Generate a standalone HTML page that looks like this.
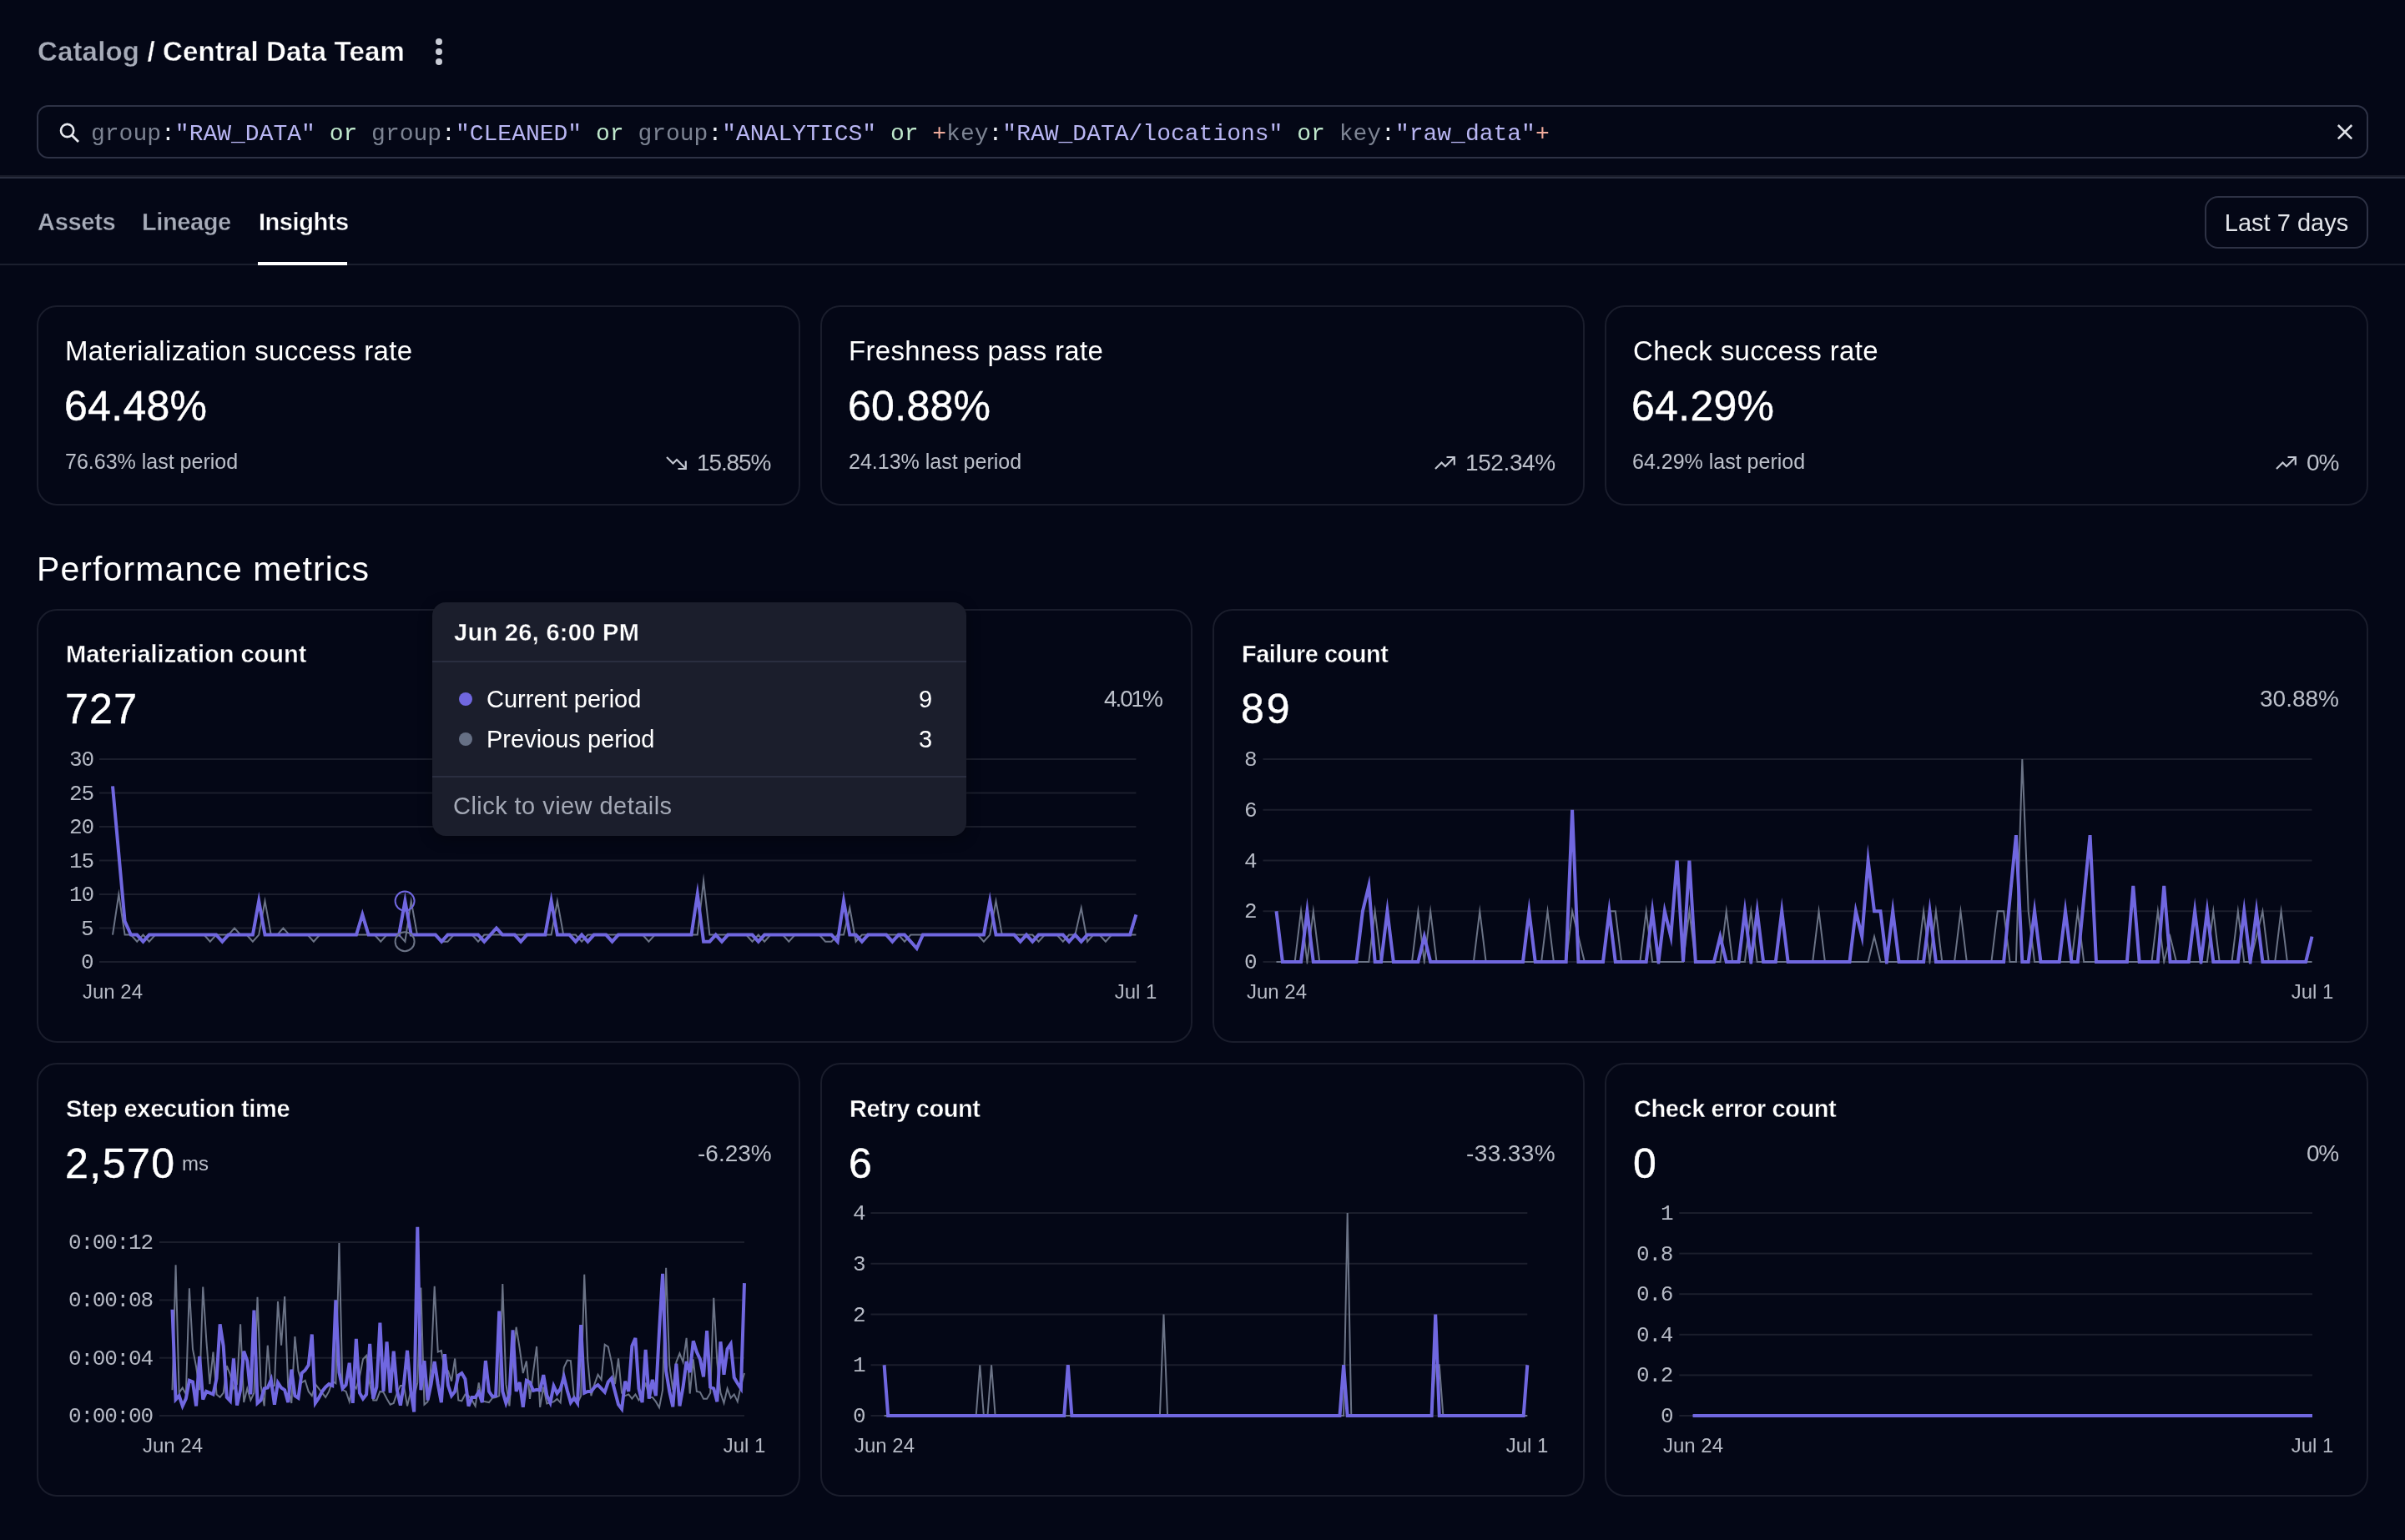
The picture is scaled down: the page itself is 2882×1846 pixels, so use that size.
<!DOCTYPE html>
<html><head><meta charset="utf-8"><title>Insights</title><style>
html,body{margin:0;padding:0;}
body{width:2882px;height:1846px;background:#040716;position:relative;overflow:hidden;font-family:'Liberation Sans', sans-serif;}
.t{position:absolute;white-space:nowrap;will-change:transform;}
.b{position:absolute;}
svg.ov{position:absolute;left:0;top:0;}
</style></head><body>
<div class="t" style="top:45.07px;font-size:33px;line-height:33px;color:#fff;font-weight:700;font-family:'Liberation Sans', sans-serif;letter-spacing:0.15px;left:45px;-webkit-text-stroke:0.4px #040716;"><span style="color:#a7acb9">Catalog</span> / Central Data Team</div>
<div class="b" style="left:522px;top:46px;width:8px;height:8px;border-radius:50%;background:#c9ccd6;"></div>
<div class="b" style="left:522px;top:58px;width:8px;height:8px;border-radius:50%;background:#c9ccd6;"></div>
<div class="b" style="left:522px;top:70px;width:8px;height:8px;border-radius:50%;background:#c9ccd6;"></div>
<div class="b" style="left:44px;top:126px;width:2794px;height:64px;border:2px solid #2e3245;border-radius:14px;box-sizing:border-box;"></div>
<div class="t" style="top:147.05px;font-size:28px;line-height:28px;color:#fff;font-weight:400;font-family:'Liberation Mono', monospace;left:108.6px;white-space:pre;"><span style="color:#7d8493">group</span><span style="color:#e9ebf0">:</span><span style="color:#b9b6f3">"RAW_DATA"</span> <span style="color:#bfe8cc">or</span> <span style="color:#7d8493">group</span><span style="color:#e9ebf0">:</span><span style="color:#b9b6f3">"CLEANED"</span> <span style="color:#bfe8cc">or</span> <span style="color:#7d8493">group</span><span style="color:#e9ebf0">:</span><span style="color:#b9b6f3">"ANALYTICS"</span> <span style="color:#bfe8cc">or</span> <span style="color:#f0ab9c">+</span><span style="color:#7d8493">key</span><span style="color:#e9ebf0">:</span><span style="color:#b9b6f3">"RAW_DATA/locations"</span> <span style="color:#bfe8cc">or</span> <span style="color:#7d8493">key</span><span style="color:#e9ebf0">:</span><span style="color:#b9b6f3">"raw_data"</span><span style="color:#f0ab9c">+</span></div>
<div class="b" style="left:0px;top:210px;width:2882px;height:2px;background:#191c2a;"></div>
<div class="b" style="left:0px;top:212px;width:2882px;height:2px;background:#2a2e3f;"></div>
<div class="t" style="top:252.45px;font-size:29px;line-height:29px;color:#a7acb9;font-weight:700;font-family:'Liberation Sans', sans-serif;letter-spacing:-0.3px;left:45px;-webkit-text-stroke:0.4px #040716;">Assets</div>
<div class="t" style="top:252.45px;font-size:29px;line-height:29px;color:#a7acb9;font-weight:700;font-family:'Liberation Sans', sans-serif;letter-spacing:-0.4px;left:169.5px;-webkit-text-stroke:0.4px #040716;">Lineage</div>
<div class="t" style="top:252.45px;font-size:29px;line-height:29px;color:#ffffff;font-weight:700;font-family:'Liberation Sans', sans-serif;letter-spacing:-0.45px;left:309.5px;-webkit-text-stroke:0.4px #040716;">Insights</div>
<div class="b" style="left:0px;top:316px;width:2882px;height:2px;background:#1b1f2e;"></div>
<div class="b" style="left:309px;top:314px;width:107px;height:4px;background:#ffffff;"></div>
<div class="b" style="left:2642px;top:235px;width:196px;height:63px;border:2px solid #2e3245;border-radius:16px;box-sizing:border-box;"></div>
<div class="t" style="top:252.95px;font-size:29px;line-height:29px;color:#e3e5ea;font-weight:400;font-family:'Liberation Sans', sans-serif;left:2239.5px;width:1000px;text-align:center;">Last 7 days</div>
<div class="b" style="left:44px;top:366px;width:915.33px;height:240px;border:2px solid #1a1d2c;border-radius:24px;box-sizing:border-box;"></div>
<div class="t" style="top:403.57px;font-size:33px;line-height:33px;color:#ffffff;font-weight:400;font-family:'Liberation Sans', sans-serif;letter-spacing:0.33px;left:78px;">Materialization success rate</div>
<div class="t" style="top:462.18px;font-size:50px;line-height:50px;color:#ffffff;font-weight:400;font-family:'Liberation Sans', sans-serif;letter-spacing:0.3px;left:76.5px;-webkit-text-stroke:0.4px #fff;">64.48%</div>
<div class="t" style="top:540.84px;font-size:25px;line-height:25px;color:#bcc0ca;font-weight:400;font-family:'Liberation Sans', sans-serif;left:77.5px;">76.63% last period</div>
<div class="t" style="top:541.30px;font-size:28px;line-height:28px;color:#bcc0ca;font-weight:400;font-family:'Liberation Sans', sans-serif;letter-spacing:-1.1px;right:1958.77px;text-align:right;display:flex;align-items:center;"><svg width="26" height="20" viewBox="0 0 26 20" style="margin-right:11px;flex:none"><g fill="none" stroke="#c3c7d1" stroke-width="2.2"><polyline points="1,3 8.5,10.5 13,6 23.5,16.5"/><polyline points="23.8,7.5 23.8,17 14.5,17"/></g></svg>15.85%</div>
<div class="b" style="left:983.33px;top:366px;width:915.34px;height:240px;border:2px solid #1a1d2c;border-radius:24px;box-sizing:border-box;"></div>
<div class="t" style="top:403.57px;font-size:33px;line-height:33px;color:#ffffff;font-weight:400;font-family:'Liberation Sans', sans-serif;letter-spacing:0.33px;left:1017.33px;">Freshness pass rate</div>
<div class="t" style="top:462.18px;font-size:50px;line-height:50px;color:#ffffff;font-weight:400;font-family:'Liberation Sans', sans-serif;letter-spacing:0.3px;left:1015.83px;-webkit-text-stroke:0.4px #fff;">60.88%</div>
<div class="t" style="top:540.84px;font-size:25px;line-height:25px;color:#bcc0ca;font-weight:400;font-family:'Liberation Sans', sans-serif;left:1016.83px;">24.13% last period</div>
<div class="t" style="top:541.30px;font-size:28px;line-height:28px;color:#bcc0ca;font-weight:400;font-family:'Liberation Sans', sans-serif;letter-spacing:-0.4px;right:1018.7299999999999px;text-align:right;display:flex;align-items:center;"><svg width="26" height="20" viewBox="0 0 26 20" style="margin-right:11px;flex:none"><g fill="none" stroke="#c3c7d1" stroke-width="2.2"><polyline points="1,17 8.5,9.5 13,14 23.5,3.5"/><polyline points="14.5,3 23.8,3 23.8,12.5"/></g></svg>152.34%</div>
<div class="b" style="left:1922.67px;top:366px;width:915.3299999999999px;height:240px;border:2px solid #1a1d2c;border-radius:24px;box-sizing:border-box;"></div>
<div class="t" style="top:403.57px;font-size:33px;line-height:33px;color:#ffffff;font-weight:400;font-family:'Liberation Sans', sans-serif;letter-spacing:0.33px;left:1956.67px;">Check success rate</div>
<div class="t" style="top:462.18px;font-size:50px;line-height:50px;color:#ffffff;font-weight:400;font-family:'Liberation Sans', sans-serif;letter-spacing:0.3px;left:1955.17px;-webkit-text-stroke:0.4px #fff;">64.29%</div>
<div class="t" style="top:540.84px;font-size:25px;line-height:25px;color:#bcc0ca;font-weight:400;font-family:'Liberation Sans', sans-serif;left:1956.17px;">64.29% last period</div>
<div class="t" style="top:541.30px;font-size:28px;line-height:28px;color:#bcc0ca;font-weight:400;font-family:'Liberation Sans', sans-serif;letter-spacing:-1.1px;right:80.1px;text-align:right;display:flex;align-items:center;"><svg width="26" height="20" viewBox="0 0 26 20" style="margin-right:11px;flex:none"><g fill="none" stroke="#c3c7d1" stroke-width="2.2"><polyline points="1,17 8.5,9.5 13,14 23.5,3.5"/><polyline points="14.5,3 23.8,3 23.8,12.5"/></g></svg>0%</div>
<div class="t" style="top:662.29px;font-size:41px;line-height:41px;color:#ffffff;font-weight:400;font-family:'Liberation Sans', sans-serif;letter-spacing:1.1px;left:44px;">Performance metrics</div>
<div class="b" style="left:44px;top:730px;width:1385px;height:520px;border:2px solid #1a1d2c;border-radius:24px;box-sizing:border-box;"></div>
<div class="t" style="top:770.25px;font-size:29px;line-height:29px;color:#ffffff;font-weight:700;font-family:'Liberation Sans', sans-serif;left:79px;-webkit-text-stroke:0.4px #040716;">Materialization count</div>
<div class="t" style="top:824.67px;font-size:50px;line-height:50px;color:#ffffff;font-weight:400;font-family:'Liberation Sans', sans-serif;letter-spacing:1.3px;left:78px;-webkit-text-stroke:0.4px #fff;">727</div>
<div class="t" style="top:824.30px;font-size:28px;line-height:28px;color:#bcc0ca;font-weight:400;font-family:'Liberation Sans', sans-serif;letter-spacing:-2.1px;right:1490.1px;text-align:right;">4.01%</div>
<div class="b" style="left:1453px;top:730px;width:1385px;height:520px;border:2px solid #1a1d2c;border-radius:24px;box-sizing:border-box;"></div>
<div class="t" style="top:770.25px;font-size:29px;line-height:29px;color:#ffffff;font-weight:700;font-family:'Liberation Sans', sans-serif;letter-spacing:-0.52px;left:1488px;-webkit-text-stroke:0.4px #040716;">Failure count</div>
<div class="t" style="top:824.67px;font-size:50px;line-height:50px;color:#ffffff;font-weight:400;font-family:'Liberation Sans', sans-serif;letter-spacing:3px;left:1487px;-webkit-text-stroke:0.4px #fff;">89</div>
<div class="t" style="top:824.30px;font-size:28px;line-height:28px;color:#bcc0ca;font-weight:400;font-family:'Liberation Sans', sans-serif;right:79px;text-align:right;">30.88%</div>
<div class="b" style="left:44px;top:1274px;width:915.33px;height:520px;border:2px solid #1a1d2c;border-radius:24px;box-sizing:border-box;"></div>
<div class="t" style="top:1315.25px;font-size:29px;line-height:29px;color:#ffffff;font-weight:700;font-family:'Liberation Sans', sans-serif;letter-spacing:-0.29px;left:79px;-webkit-text-stroke:0.4px #040716;">Step execution time</div>
<div class="t" style="top:1369.67px;font-size:50px;line-height:50px;color:#ffffff;font-weight:400;font-family:'Liberation Sans', sans-serif;letter-spacing:1.5px;left:78px;-webkit-text-stroke:0.4px #fff;">2,570</div>
<div class="t" style="top:1383.18px;font-size:24px;line-height:24px;color:#bcc0ca;font-weight:400;font-family:'Liberation Sans', sans-serif;left:218px;">ms</div>
<div class="t" style="top:1369.30px;font-size:28px;line-height:28px;color:#bcc0ca;font-weight:400;font-family:'Liberation Sans', sans-serif;right:1957.67px;text-align:right;">-6.23%</div>
<div class="b" style="left:983.33px;top:1274px;width:915.34px;height:520px;border:2px solid #1a1d2c;border-radius:24px;box-sizing:border-box;"></div>
<div class="t" style="top:1315.25px;font-size:29px;line-height:29px;color:#ffffff;font-weight:700;font-family:'Liberation Sans', sans-serif;letter-spacing:-0.42px;left:1018.33px;-webkit-text-stroke:0.4px #040716;">Retry count</div>
<div class="t" style="top:1369.67px;font-size:50px;line-height:50px;color:#ffffff;font-weight:400;font-family:'Liberation Sans', sans-serif;left:1017.33px;-webkit-text-stroke:0.4px #fff;">6</div>
<div class="t" style="top:1369.30px;font-size:28px;line-height:28px;color:#bcc0ca;font-weight:400;font-family:'Liberation Sans', sans-serif;letter-spacing:0.4px;right:1017.93px;text-align:right;">-33.33%</div>
<div class="b" style="left:1922.67px;top:1274px;width:915.3299999999999px;height:520px;border:2px solid #1a1d2c;border-radius:24px;box-sizing:border-box;"></div>
<div class="t" style="top:1315.25px;font-size:29px;line-height:29px;color:#ffffff;font-weight:700;font-family:'Liberation Sans', sans-serif;letter-spacing:-0.44px;left:1957.67px;-webkit-text-stroke:0.4px #040716;">Check error count</div>
<div class="t" style="top:1369.67px;font-size:50px;line-height:50px;color:#ffffff;font-weight:400;font-family:'Liberation Sans', sans-serif;left:1956.67px;-webkit-text-stroke:0.4px #fff;">0</div>
<div class="t" style="top:1369.30px;font-size:28px;line-height:28px;color:#bcc0ca;font-weight:400;font-family:'Liberation Sans', sans-serif;letter-spacing:-1.2px;right:80.2px;text-align:right;">0%</div>
<div class="t" style="top:1141.08px;font-size:26px;line-height:26px;color:#b6bac5;font-weight:400;font-family:'Liberation Mono', monospace;letter-spacing:-1.2px;right:2770.7px;text-align:right;">0</div>
<div class="t" style="top:1100.58px;font-size:26px;line-height:26px;color:#b6bac5;font-weight:400;font-family:'Liberation Mono', monospace;letter-spacing:-1.2px;right:2770.7px;text-align:right;">5</div>
<div class="t" style="top:1060.08px;font-size:26px;line-height:26px;color:#b6bac5;font-weight:400;font-family:'Liberation Mono', monospace;letter-spacing:-1.2px;right:2770.7px;text-align:right;">10</div>
<div class="t" style="top:1019.58px;font-size:26px;line-height:26px;color:#b6bac5;font-weight:400;font-family:'Liberation Mono', monospace;letter-spacing:-1.2px;right:2770.7px;text-align:right;">15</div>
<div class="t" style="top:979.08px;font-size:26px;line-height:26px;color:#b6bac5;font-weight:400;font-family:'Liberation Mono', monospace;letter-spacing:-1.2px;right:2770.7px;text-align:right;">20</div>
<div class="t" style="top:938.58px;font-size:26px;line-height:26px;color:#b6bac5;font-weight:400;font-family:'Liberation Mono', monospace;letter-spacing:-1.2px;right:2770.7px;text-align:right;">25</div>
<div class="t" style="top:898.08px;font-size:26px;line-height:26px;color:#b6bac5;font-weight:400;font-family:'Liberation Mono', monospace;letter-spacing:-1.2px;right:2770.7px;text-align:right;">30</div>
<div class="t" style="top:1176.68px;font-size:24px;line-height:24px;color:#b6bac5;font-weight:400;font-family:'Liberation Sans', sans-serif;left:-365px;width:1000px;text-align:center;">Jun 24</div>
<div class="t" style="top:1176.68px;font-size:24px;line-height:24px;color:#b6bac5;font-weight:400;font-family:'Liberation Sans', sans-serif;left:861.4000000000001px;width:1000px;text-align:center;">Jul 1</div>
<div class="t" style="top:1141.08px;font-size:26px;line-height:26px;color:#b6bac5;font-weight:400;font-family:'Liberation Mono', monospace;letter-spacing:-1.2px;right:1376.7px;text-align:right;">0</div>
<div class="t" style="top:1080.33px;font-size:26px;line-height:26px;color:#b6bac5;font-weight:400;font-family:'Liberation Mono', monospace;letter-spacing:-1.2px;right:1376.7px;text-align:right;">2</div>
<div class="t" style="top:1019.58px;font-size:26px;line-height:26px;color:#b6bac5;font-weight:400;font-family:'Liberation Mono', monospace;letter-spacing:-1.2px;right:1376.7px;text-align:right;">4</div>
<div class="t" style="top:958.83px;font-size:26px;line-height:26px;color:#b6bac5;font-weight:400;font-family:'Liberation Mono', monospace;letter-spacing:-1.2px;right:1376.7px;text-align:right;">6</div>
<div class="t" style="top:898.08px;font-size:26px;line-height:26px;color:#b6bac5;font-weight:400;font-family:'Liberation Mono', monospace;letter-spacing:-1.2px;right:1376.7px;text-align:right;">8</div>
<div class="t" style="top:1176.68px;font-size:24px;line-height:24px;color:#b6bac5;font-weight:400;font-family:'Liberation Sans', sans-serif;left:1029.5px;width:1000px;text-align:center;">Jun 24</div>
<div class="t" style="top:1176.68px;font-size:24px;line-height:24px;color:#b6bac5;font-weight:400;font-family:'Liberation Sans', sans-serif;left:2270.5px;width:1000px;text-align:center;">Jul 1</div>
<div class="t" style="top:1685.08px;font-size:26px;line-height:26px;color:#b6bac5;font-weight:400;font-family:'Liberation Mono', monospace;letter-spacing:-1.2px;right:2698.8999999999996px;text-align:right;">0:00:00</div>
<div class="t" style="top:1615.78px;font-size:26px;line-height:26px;color:#b6bac5;font-weight:400;font-family:'Liberation Mono', monospace;letter-spacing:-1.2px;right:2698.8999999999996px;text-align:right;">0:00:04</div>
<div class="t" style="top:1546.48px;font-size:26px;line-height:26px;color:#b6bac5;font-weight:400;font-family:'Liberation Mono', monospace;letter-spacing:-1.2px;right:2698.8999999999996px;text-align:right;">0:00:08</div>
<div class="t" style="top:1477.08px;font-size:26px;line-height:26px;color:#b6bac5;font-weight:400;font-family:'Liberation Mono', monospace;letter-spacing:-1.2px;right:2698.8999999999996px;text-align:right;">0:00:12</div>
<div class="t" style="top:1721.48px;font-size:24px;line-height:24px;color:#b6bac5;font-weight:400;font-family:'Liberation Sans', sans-serif;left:-293.5px;width:1000px;text-align:center;">Jun 24</div>
<div class="t" style="top:1721.48px;font-size:24px;line-height:24px;color:#b6bac5;font-weight:400;font-family:'Liberation Sans', sans-serif;left:392px;width:1000px;text-align:center;">Jul 1</div>
<div class="t" style="top:1685.08px;font-size:26px;line-height:26px;color:#b6bac5;font-weight:400;font-family:'Liberation Mono', monospace;letter-spacing:-1.2px;right:1845.7px;text-align:right;">0</div>
<div class="t" style="top:1624.33px;font-size:26px;line-height:26px;color:#b6bac5;font-weight:400;font-family:'Liberation Mono', monospace;letter-spacing:-1.2px;right:1845.7px;text-align:right;">1</div>
<div class="t" style="top:1563.58px;font-size:26px;line-height:26px;color:#b6bac5;font-weight:400;font-family:'Liberation Mono', monospace;letter-spacing:-1.2px;right:1845.7px;text-align:right;">2</div>
<div class="t" style="top:1502.83px;font-size:26px;line-height:26px;color:#b6bac5;font-weight:400;font-family:'Liberation Mono', monospace;letter-spacing:-1.2px;right:1845.7px;text-align:right;">3</div>
<div class="t" style="top:1442.08px;font-size:26px;line-height:26px;color:#b6bac5;font-weight:400;font-family:'Liberation Mono', monospace;letter-spacing:-1.2px;right:1845.7px;text-align:right;">4</div>
<div class="t" style="top:1721.48px;font-size:24px;line-height:24px;color:#b6bac5;font-weight:400;font-family:'Liberation Sans', sans-serif;left:559.5999999999999px;width:1000px;text-align:center;">Jun 24</div>
<div class="t" style="top:1721.48px;font-size:24px;line-height:24px;color:#b6bac5;font-weight:400;font-family:'Liberation Sans', sans-serif;left:1330.3px;width:1000px;text-align:center;">Jul 1</div>
<div class="t" style="top:1685.08px;font-size:26px;line-height:26px;color:#b6bac5;font-weight:400;font-family:'Liberation Mono', monospace;letter-spacing:-1.2px;right:877.3px;text-align:right;">0</div>
<div class="t" style="top:1636.48px;font-size:26px;line-height:26px;color:#b6bac5;font-weight:400;font-family:'Liberation Mono', monospace;letter-spacing:-1.2px;right:877.3px;text-align:right;">0.2</div>
<div class="t" style="top:1587.88px;font-size:26px;line-height:26px;color:#b6bac5;font-weight:400;font-family:'Liberation Mono', monospace;letter-spacing:-1.2px;right:877.3px;text-align:right;">0.4</div>
<div class="t" style="top:1539.28px;font-size:26px;line-height:26px;color:#b6bac5;font-weight:400;font-family:'Liberation Mono', monospace;letter-spacing:-1.2px;right:877.3px;text-align:right;">0.6</div>
<div class="t" style="top:1490.68px;font-size:26px;line-height:26px;color:#b6bac5;font-weight:400;font-family:'Liberation Mono', monospace;letter-spacing:-1.2px;right:877.3px;text-align:right;">0.8</div>
<div class="t" style="top:1442.08px;font-size:26px;line-height:26px;color:#b6bac5;font-weight:400;font-family:'Liberation Mono', monospace;letter-spacing:-1.2px;right:877.3px;text-align:right;">1</div>
<div class="t" style="top:1721.48px;font-size:24px;line-height:24px;color:#b6bac5;font-weight:400;font-family:'Liberation Sans', sans-serif;left:1528.6px;width:1000px;text-align:center;">Jun 24</div>
<div class="t" style="top:1721.48px;font-size:24px;line-height:24px;color:#b6bac5;font-weight:400;font-family:'Liberation Sans', sans-serif;left:2271px;width:1000px;text-align:center;">Jul 1</div>
<svg class="ov" width="2882" height="1846" viewBox="0 0 2882 1846">
<circle cx="80.6" cy="156.5" r="7.6" fill="none" stroke="#e6e8ee" stroke-width="2.6"/><line x1="86" y1="162" x2="94" y2="170" stroke="#e6e8ee" stroke-width="2.8"/>
<path d="M2801.8 150 L2818.2 166.4 M2818.2 150 L2801.8 166.4" stroke="#dfe1e7" stroke-width="2.6"/>
<clipPath id="clip1"><rect x="115" y="755.5" width="1254.4" height="400"/></clipPath>
<rect x="119" y="1152.0" width="1242.4" height="2" fill="#1b1e2c"/>
<rect x="119" y="1111.5" width="1242.4" height="2" fill="#1b1e2c"/>
<rect x="119" y="1071.0" width="1242.4" height="2" fill="#1b1e2c"/>
<rect x="119" y="1030.5" width="1242.4" height="2" fill="#1b1e2c"/>
<rect x="119" y="990.0" width="1242.4" height="2" fill="#1b1e2c"/>
<rect x="119" y="949.5" width="1242.4" height="2" fill="#1b1e2c"/>
<rect x="119" y="909.0" width="1242.4" height="2" fill="#1b1e2c"/>
<polyline clip-path="url(#clip1)" points="135.00,1120.60 142.30,1072.00 149.60,1120.60 156.90,1120.60 164.20,1128.70 171.50,1120.60 178.80,1128.70 186.10,1120.60 193.40,1120.60 200.70,1120.60 208.00,1120.60 215.30,1120.60 222.60,1120.60 229.90,1120.60 237.20,1120.60 244.50,1120.60 251.80,1128.70 259.10,1120.60 266.40,1120.60 273.70,1120.60 281.00,1112.50 288.30,1120.60 295.60,1120.60 302.90,1128.70 310.20,1120.60 317.50,1080.10 324.80,1120.60 332.10,1120.60 339.40,1112.50 346.70,1120.60 354.00,1120.60 361.30,1120.60 368.60,1120.60 375.90,1128.70 383.20,1120.60 390.50,1120.60 397.80,1120.60 405.10,1120.60 412.40,1120.60 419.70,1120.60 427.00,1120.60 434.30,1120.60 441.60,1120.60 448.90,1120.60 456.20,1128.70 463.50,1120.60 470.80,1120.60 478.10,1120.60 485.40,1128.70 492.70,1080.10 500.00,1120.60 507.30,1120.60 514.60,1120.60 521.90,1120.60 529.20,1128.70 536.50,1128.70 543.80,1120.60 551.10,1120.60 558.40,1120.60 565.70,1120.60 573.00,1128.70 580.30,1120.60 587.60,1120.60 594.90,1120.60 602.20,1120.60 609.50,1120.60 616.80,1120.60 624.10,1120.60 631.40,1120.60 638.70,1120.60 646.00,1120.60 653.30,1120.60 660.60,1120.60 667.90,1080.10 675.20,1120.60 682.50,1120.60 689.80,1120.60 697.10,1128.70 704.40,1120.60 711.70,1120.60 719.00,1120.60 726.30,1120.60 733.60,1120.60 740.90,1120.60 748.20,1120.60 755.50,1120.60 762.80,1120.60 770.10,1120.60 777.40,1128.70 784.70,1120.60 792.00,1120.60 799.30,1120.60 806.60,1120.60 813.90,1120.60 821.20,1120.60 828.50,1120.60 835.80,1120.60 843.10,1055.80 850.40,1120.60 857.70,1120.60 865.00,1120.60 872.30,1120.60 879.60,1120.60 886.90,1120.60 894.20,1120.60 901.50,1128.70 908.80,1120.60 916.10,1128.70 923.40,1120.60 930.70,1120.60 938.00,1120.60 945.30,1128.70 952.60,1120.60 959.90,1120.60 967.20,1120.60 974.50,1120.60 981.80,1120.60 989.10,1128.70 996.40,1128.70 1003.70,1120.60 1011.00,1120.60 1018.30,1088.20 1025.60,1128.70 1032.90,1120.60 1040.20,1120.60 1047.50,1120.60 1054.80,1120.60 1062.10,1120.60 1069.40,1120.60 1076.70,1120.60 1084.00,1128.70 1091.30,1120.60 1098.60,1120.60 1105.90,1120.60 1113.20,1120.60 1120.50,1120.60 1127.80,1120.60 1135.10,1120.60 1142.40,1120.60 1149.70,1120.60 1157.00,1120.60 1164.30,1120.60 1171.60,1120.60 1178.90,1128.70 1186.20,1120.60 1193.50,1080.10 1200.80,1120.60 1208.10,1120.60 1215.40,1120.60 1222.70,1120.60 1230.00,1120.60 1237.30,1120.60 1244.60,1128.70 1251.90,1120.60 1259.20,1120.60 1266.50,1120.60 1273.80,1128.70 1281.10,1120.60 1288.40,1120.60 1295.70,1088.20 1303.00,1128.70 1310.30,1120.60 1317.60,1120.60 1324.90,1128.70 1332.20,1120.60 1339.50,1120.60 1346.80,1120.60 1354.10,1120.60 1361.40,1120.60" fill="none" stroke="#6b7386" stroke-width="2" stroke-linejoin="miter" stroke-miterlimit="12"/>
<polyline clip-path="url(#clip1)" points="135.00,942.40 142.30,1023.40 149.60,1104.40 156.90,1120.60 164.20,1120.60 171.50,1128.70 178.80,1120.60 186.10,1120.60 193.40,1120.60 200.70,1120.60 208.00,1120.60 215.30,1120.60 222.60,1120.60 229.90,1120.60 237.20,1120.60 244.50,1120.60 251.80,1120.60 259.10,1120.60 266.40,1128.70 273.70,1120.60 281.00,1120.60 288.30,1120.60 295.60,1120.60 302.90,1120.60 310.20,1080.10 317.50,1120.60 324.80,1120.60 332.10,1120.60 339.40,1120.60 346.70,1120.60 354.00,1120.60 361.30,1120.60 368.60,1120.60 375.90,1120.60 383.20,1120.60 390.50,1120.60 397.80,1120.60 405.10,1120.60 412.40,1120.60 419.70,1120.60 427.00,1120.60 434.30,1096.30 441.60,1120.60 448.90,1120.60 456.20,1120.60 463.50,1120.60 470.80,1120.60 478.10,1120.60 485.40,1080.10 492.70,1120.60 500.00,1120.60 507.30,1120.60 514.60,1120.60 521.90,1120.60 529.20,1128.70 536.50,1120.60 543.80,1120.60 551.10,1120.60 558.40,1120.60 565.70,1120.60 573.00,1120.60 580.30,1128.70 587.60,1120.60 594.90,1112.50 602.20,1120.60 609.50,1120.60 616.80,1120.60 624.10,1128.70 631.40,1120.60 638.70,1120.60 646.00,1120.60 653.30,1120.60 660.60,1080.10 667.90,1120.60 675.20,1120.60 682.50,1120.60 689.80,1128.70 697.10,1120.60 704.40,1128.70 711.70,1120.60 719.00,1120.60 726.30,1120.60 733.60,1128.70 740.90,1120.60 748.20,1120.60 755.50,1120.60 762.80,1120.60 770.10,1120.60 777.40,1120.60 784.70,1120.60 792.00,1120.60 799.30,1120.60 806.60,1120.60 813.90,1120.60 821.20,1120.60 828.50,1120.60 835.80,1072.00 843.10,1128.70 850.40,1128.70 857.70,1120.60 865.00,1128.70 872.30,1120.60 879.60,1120.60 886.90,1120.60 894.20,1120.60 901.50,1120.60 908.80,1128.70 916.10,1120.60 923.40,1120.60 930.70,1120.60 938.00,1120.60 945.30,1120.60 952.60,1120.60 959.90,1120.60 967.20,1120.60 974.50,1120.60 981.80,1120.60 989.10,1120.60 996.40,1120.60 1003.70,1128.70 1011.00,1080.10 1018.30,1120.60 1025.60,1120.60 1032.90,1128.70 1040.20,1120.60 1047.50,1120.60 1054.80,1120.60 1062.10,1120.60 1069.40,1128.70 1076.70,1120.60 1084.00,1120.60 1091.30,1128.70 1098.60,1136.80 1105.90,1120.60 1113.20,1120.60 1120.50,1120.60 1127.80,1120.60 1135.10,1120.60 1142.40,1120.60 1149.70,1120.60 1157.00,1120.60 1164.30,1120.60 1171.60,1120.60 1178.90,1120.60 1186.20,1080.10 1193.50,1120.60 1200.80,1120.60 1208.10,1120.60 1215.40,1120.60 1222.70,1128.70 1230.00,1120.60 1237.30,1128.70 1244.60,1120.60 1251.90,1120.60 1259.20,1120.60 1266.50,1120.60 1273.80,1120.60 1281.10,1128.70 1288.40,1120.60 1295.70,1128.70 1303.00,1120.60 1310.30,1120.60 1317.60,1120.60 1324.90,1120.60 1332.20,1120.60 1339.50,1120.60 1346.80,1120.60 1354.10,1120.60 1361.40,1096.30" fill="none" stroke="#7067e0" stroke-width="4" stroke-linejoin="miter" stroke-miterlimit="12"/>
<clipPath id="clip2"><rect x="1509.5" y="755.5" width="1269.0" height="400"/></clipPath>
<rect x="1513.5" y="1152.0" width="1257.0" height="2" fill="#1b1e2c"/>
<rect x="1513.5" y="1091.25" width="1257.0" height="2" fill="#1b1e2c"/>
<rect x="1513.5" y="1030.5" width="1257.0" height="2" fill="#1b1e2c"/>
<rect x="1513.5" y="969.75" width="1257.0" height="2" fill="#1b1e2c"/>
<rect x="1513.5" y="909.0" width="1257.0" height="2" fill="#1b1e2c"/>
<polyline clip-path="url(#clip2)" points="1529.50,1153.00 1536.89,1153.00 1544.27,1153.00 1551.66,1153.00 1559.05,1092.25 1566.43,1153.00 1573.82,1092.25 1581.21,1153.00 1588.60,1153.00 1595.98,1153.00 1603.37,1153.00 1610.76,1153.00 1618.14,1153.00 1625.53,1153.00 1632.92,1153.00 1640.30,1153.00 1647.69,1092.25 1655.08,1153.00 1662.46,1153.00 1669.85,1153.00 1677.24,1153.00 1684.62,1153.00 1692.01,1153.00 1699.40,1092.25 1706.79,1153.00 1714.17,1092.25 1721.56,1153.00 1728.95,1153.00 1736.33,1153.00 1743.72,1153.00 1751.11,1153.00 1758.49,1153.00 1765.88,1153.00 1773.27,1092.25 1780.65,1153.00 1788.04,1153.00 1795.43,1153.00 1802.82,1153.00 1810.20,1153.00 1817.59,1153.00 1824.98,1153.00 1832.36,1153.00 1839.75,1153.00 1847.14,1153.00 1854.52,1092.25 1861.91,1153.00 1869.30,1153.00 1876.68,1153.00 1884.07,1092.25 1891.46,1122.62 1898.85,1153.00 1906.23,1153.00 1913.62,1153.00 1921.01,1153.00 1928.39,1092.25 1935.78,1092.25 1943.17,1153.00 1950.55,1153.00 1957.94,1153.00 1965.33,1153.00 1972.71,1092.25 1980.10,1153.00 1987.49,1153.00 1994.88,1153.00 2002.26,1153.00 2009.65,1153.00 2017.04,1153.00 2024.42,1092.25 2031.81,1153.00 2039.20,1153.00 2046.58,1153.00 2053.97,1153.00 2061.36,1153.00 2068.74,1092.25 2076.13,1153.00 2083.52,1153.00 2090.90,1153.00 2098.29,1092.25 2105.68,1153.00 2113.07,1153.00 2120.45,1153.00 2127.84,1153.00 2135.23,1153.00 2142.61,1153.00 2150.00,1153.00 2157.39,1153.00 2164.77,1153.00 2172.16,1153.00 2179.55,1092.25 2186.93,1153.00 2194.32,1153.00 2201.71,1153.00 2209.10,1153.00 2216.48,1153.00 2223.87,1153.00 2231.26,1153.00 2238.64,1153.00 2246.03,1122.62 2253.42,1153.00 2260.80,1153.00 2268.19,1153.00 2275.58,1153.00 2282.96,1153.00 2290.35,1153.00 2297.74,1153.00 2305.12,1092.25 2312.51,1153.00 2319.90,1092.25 2327.29,1153.00 2334.67,1153.00 2342.06,1153.00 2349.45,1092.25 2356.83,1153.00 2364.22,1153.00 2371.61,1153.00 2378.99,1153.00 2386.38,1153.00 2393.77,1092.25 2401.15,1092.25 2408.54,1153.00 2415.93,1153.00 2423.32,910.00 2430.70,1092.25 2438.09,1153.00 2445.48,1153.00 2452.86,1153.00 2460.25,1153.00 2467.64,1153.00 2475.02,1153.00 2482.41,1153.00 2489.80,1092.25 2497.18,1153.00 2504.57,1153.00 2511.96,1153.00 2519.35,1153.00 2526.73,1153.00 2534.12,1153.00 2541.51,1153.00 2548.89,1153.00 2556.28,1153.00 2563.67,1153.00 2571.05,1153.00 2578.44,1153.00 2585.83,1092.25 2593.21,1153.00 2600.60,1122.62 2607.99,1153.00 2615.38,1153.00 2622.76,1153.00 2630.15,1153.00 2637.54,1153.00 2644.92,1153.00 2652.31,1092.25 2659.70,1153.00 2667.08,1153.00 2674.47,1153.00 2681.86,1092.25 2689.24,1153.00 2696.63,1153.00 2704.02,1122.62 2711.40,1092.25 2718.79,1153.00 2726.18,1153.00 2733.57,1092.25 2740.95,1153.00 2748.34,1153.00 2755.73,1153.00 2763.11,1153.00 2770.50,1153.00" fill="none" stroke="#6b7386" stroke-width="2" stroke-linejoin="miter" stroke-miterlimit="12"/>
<polyline clip-path="url(#clip2)" points="1529.50,1092.25 1536.89,1153.00 1544.27,1153.00 1551.66,1153.00 1559.05,1153.00 1566.43,1092.25 1573.82,1153.00 1581.21,1153.00 1588.60,1153.00 1595.98,1153.00 1603.37,1153.00 1610.76,1153.00 1618.14,1153.00 1625.53,1153.00 1632.92,1092.25 1640.30,1061.88 1647.69,1153.00 1655.08,1153.00 1662.46,1092.25 1669.85,1153.00 1677.24,1153.00 1684.62,1153.00 1692.01,1153.00 1699.40,1153.00 1706.79,1122.62 1714.17,1153.00 1721.56,1153.00 1728.95,1153.00 1736.33,1153.00 1743.72,1153.00 1751.11,1153.00 1758.49,1153.00 1765.88,1153.00 1773.27,1153.00 1780.65,1153.00 1788.04,1153.00 1795.43,1153.00 1802.82,1153.00 1810.20,1153.00 1817.59,1153.00 1824.98,1153.00 1832.36,1092.25 1839.75,1153.00 1847.14,1153.00 1854.52,1153.00 1861.91,1153.00 1869.30,1153.00 1876.68,1153.00 1884.07,970.75 1891.46,1153.00 1898.85,1153.00 1906.23,1153.00 1913.62,1153.00 1921.01,1153.00 1928.39,1092.25 1935.78,1153.00 1943.17,1153.00 1950.55,1153.00 1957.94,1153.00 1965.33,1153.00 1972.71,1153.00 1980.10,1092.25 1987.49,1153.00 1994.88,1092.25 2002.26,1122.62 2009.65,1031.50 2017.04,1153.00 2024.42,1031.50 2031.81,1153.00 2039.20,1153.00 2046.58,1153.00 2053.97,1153.00 2061.36,1122.62 2068.74,1153.00 2076.13,1153.00 2083.52,1153.00 2090.90,1092.25 2098.29,1153.00 2105.68,1092.25 2113.07,1153.00 2120.45,1153.00 2127.84,1153.00 2135.23,1092.25 2142.61,1153.00 2150.00,1153.00 2157.39,1153.00 2164.77,1153.00 2172.16,1153.00 2179.55,1153.00 2186.93,1153.00 2194.32,1153.00 2201.71,1153.00 2209.10,1153.00 2216.48,1153.00 2223.87,1092.25 2231.26,1122.62 2238.64,1031.50 2246.03,1092.25 2253.42,1092.25 2260.80,1153.00 2268.19,1092.25 2275.58,1153.00 2282.96,1153.00 2290.35,1153.00 2297.74,1153.00 2305.12,1153.00 2312.51,1092.25 2319.90,1153.00 2327.29,1153.00 2334.67,1153.00 2342.06,1153.00 2349.45,1153.00 2356.83,1153.00 2364.22,1153.00 2371.61,1153.00 2378.99,1153.00 2386.38,1153.00 2393.77,1153.00 2401.15,1153.00 2408.54,1077.06 2415.93,1001.12 2423.32,1153.00 2430.70,1153.00 2438.09,1092.25 2445.48,1153.00 2452.86,1153.00 2460.25,1153.00 2467.64,1153.00 2475.02,1092.25 2482.41,1153.00 2489.80,1153.00 2497.18,1077.06 2504.57,1001.12 2511.96,1153.00 2519.35,1153.00 2526.73,1153.00 2534.12,1153.00 2541.51,1153.00 2548.89,1153.00 2556.28,1061.88 2563.67,1153.00 2571.05,1153.00 2578.44,1153.00 2585.83,1153.00 2593.21,1061.88 2600.60,1153.00 2607.99,1153.00 2615.38,1153.00 2622.76,1153.00 2630.15,1092.25 2637.54,1153.00 2644.92,1092.25 2652.31,1153.00 2659.70,1153.00 2667.08,1153.00 2674.47,1153.00 2681.86,1153.00 2689.24,1092.25 2696.63,1153.00 2704.02,1092.25 2711.40,1153.00 2718.79,1153.00 2726.18,1153.00 2733.57,1153.00 2740.95,1153.00 2748.34,1153.00 2755.73,1153.00 2763.11,1153.00 2770.50,1122.62" fill="none" stroke="#7067e0" stroke-width="4" stroke-linejoin="miter" stroke-miterlimit="12"/>
<clipPath id="clip3"><rect x="187" y="1299.5" width="713" height="400"/></clipPath>
<rect x="191" y="1696" width="701" height="2" fill="#1b1e2c"/>
<rect x="191" y="1626.7" width="701" height="2" fill="#1b1e2c"/>
<rect x="191" y="1557.4" width="701" height="2" fill="#1b1e2c"/>
<rect x="191" y="1488" width="701" height="2" fill="#1b1e2c"/>
<polyline clip-path="url(#clip3)" points="206.50,1666.16 210.58,1516.26 214.66,1669.66 218.74,1663.53 222.82,1671.42 226.90,1544.31 230.98,1617.07 235.06,1638.11 239.14,1666.16 243.22,1542.56 247.30,1606.55 251.38,1659.14 255.46,1620.58 259.54,1671.42 263.62,1674.92 267.71,1669.66 271.79,1637.23 275.87,1647.75 279.95,1664.40 284.03,1659.14 288.11,1587.27 292.19,1681.06 296.27,1664.40 300.35,1678.43 304.43,1669.66 308.51,1554.83 312.59,1660.90 316.67,1685.44 320.75,1612.69 324.83,1662.65 328.91,1660.90 332.99,1560.09 337.07,1612.69 341.15,1553.96 345.23,1662.65 349.31,1681.94 353.39,1602.17 357.47,1643.37 361.55,1657.39 365.63,1654.76 369.71,1667.91 373.79,1673.17 377.88,1659.14 381.96,1664.40 386.04,1669.66 390.12,1674.92 394.20,1667.91 398.28,1655.64 402.36,1658.27 406.44,1489.96 410.52,1666.16 414.60,1667.91 418.68,1680.18 422.76,1659.14 426.84,1664.40 430.92,1650.38 435.00,1629.34 439.08,1624.96 443.16,1659.14 447.24,1678.43 451.32,1678.43 455.40,1667.91 459.48,1668.79 463.56,1676.68 467.64,1683.69 471.72,1681.94 475.80,1669.66 479.88,1660.90 483.96,1660.90 488.04,1685.44 492.12,1667.91 496.21,1674.92 500.29,1657.39 504.37,1543.44 508.45,1683.69 512.53,1680.18 516.61,1636.35 520.69,1541.68 524.77,1620.58 528.85,1618.82 532.93,1643.37 537.01,1643.37 541.09,1655.64 545.17,1628.46 549.25,1678.43 553.33,1679.31 557.41,1671.42 561.49,1673.17 565.57,1678.43 569.65,1685.44 573.73,1657.39 577.81,1679.31 581.89,1680.18 585.97,1681.06 590.05,1675.80 594.13,1674.92 598.21,1673.17 602.29,1539.05 606.38,1659.14 610.46,1685.44 614.54,1629.34 618.62,1590.77 622.70,1616.18 626.78,1646.00 630.86,1631.64 634.94,1676.91 639.02,1644.89 643.10,1613.98 647.18,1686.85 651.26,1662.56 655.34,1682.43 659.42,1681.33 663.50,1680.22 667.58,1676.91 671.66,1681.33 675.74,1639.37 679.82,1630.54 683.90,1631.09 687.98,1675.81 692.06,1681.94 696.14,1673.17 700.22,1527.66 704.30,1631.09 708.38,1673.17 712.46,1659.14 716.54,1647.75 720.62,1653.88 724.71,1611.81 728.79,1614.44 732.87,1632.85 736.95,1659.14 741.03,1628.46 745.11,1669.66 749.19,1673.17 753.27,1671.42 757.35,1676.68 761.43,1671.42 765.51,1678.43 769.59,1673.17 773.67,1657.39 777.75,1674.92 781.83,1674.92 785.91,1680.18 789.99,1687.19 794.07,1666.16 798.15,1519.77 802.23,1636.35 806.31,1666.16 810.39,1632.85 814.47,1622.33 818.55,1632.85 822.63,1603.92 826.71,1670.54 830.79,1629.34 834.88,1667.91 838.96,1668.79 843.04,1676.68 847.12,1676.68 851.20,1669.66 855.28,1555.71 859.36,1632.85 863.44,1669.66 867.52,1681.94 871.60,1664.40 875.68,1675.80 879.76,1671.42 883.84,1680.18 887.92,1660.90 892.00,1646.00" fill="none" stroke="#6b7386" stroke-width="2" stroke-linejoin="miter" stroke-miterlimit="4"/>
<polyline clip-path="url(#clip3)" points="206.50,1569.73 210.58,1677.55 214.66,1673.17 218.74,1685.44 222.82,1676.68 226.90,1654.76 230.98,1656.51 235.06,1685.44 239.14,1625.83 243.22,1677.55 247.30,1667.91 251.38,1669.66 255.46,1671.42 259.54,1652.13 263.62,1587.27 267.71,1613.56 271.79,1674.92 275.87,1679.31 279.95,1628.46 284.03,1684.57 288.11,1666.16 292.19,1619.70 296.27,1631.09 300.35,1671.42 304.43,1570.61 308.51,1681.94 312.59,1678.43 316.67,1664.40 320.75,1663.53 324.83,1653.88 328.91,1683.69 332.99,1657.39 337.07,1663.53 341.15,1666.16 345.23,1681.06 349.31,1641.61 353.39,1673.17 357.47,1675.80 361.55,1646.00 365.63,1642.49 369.71,1636.35 373.79,1599.54 377.88,1681.94 381.96,1675.80 386.04,1667.91 390.12,1662.65 394.20,1659.14 398.28,1660.90 402.36,1558.34 406.44,1645.12 410.52,1664.40 414.60,1660.02 418.68,1633.72 422.76,1681.94 426.84,1604.80 430.92,1669.66 435.00,1676.68 439.08,1671.42 443.16,1610.93 447.24,1676.68 451.32,1662.65 455.40,1585.51 459.48,1667.91 463.56,1608.30 467.64,1669.66 471.72,1619.70 475.80,1666.16 479.88,1684.57 483.96,1659.14 488.04,1618.82 492.12,1666.16 496.21,1692.45 500.29,1470.68 504.37,1666.16 508.45,1631.09 512.53,1678.43 516.61,1659.14 520.69,1631.97 524.77,1659.14 528.85,1681.06 532.93,1623.20 537.01,1660.90 541.09,1673.17 545.17,1667.91 549.25,1648.63 553.33,1646.00 557.41,1653.01 561.49,1685.44 565.57,1674.92 569.65,1674.92 573.73,1668.79 577.81,1681.06 581.89,1631.09 585.97,1667.91 590.05,1674.05 594.13,1673.17 598.21,1571.49 602.29,1667.91 606.38,1681.94 610.46,1671.42 614.54,1594.28 618.62,1667.91 622.70,1657.04 626.78,1686.85 630.86,1654.83 634.94,1657.04 639.02,1666.97 643.10,1665.87 647.18,1666.42 651.26,1648.20 655.34,1672.49 659.42,1681.33 663.50,1661.45 667.58,1670.29 671.66,1664.77 675.74,1650.41 679.82,1666.97 683.90,1681.33 687.98,1675.81 692.06,1681.94 696.14,1588.14 700.22,1669.66 704.30,1667.91 708.38,1667.91 712.46,1662.65 716.54,1660.02 720.62,1664.40 724.71,1668.79 728.79,1656.51 732.87,1652.13 736.95,1667.91 741.03,1683.69 745.11,1688.95 749.19,1655.64 753.27,1667.91 757.35,1613.56 761.43,1603.92 765.51,1664.40 769.59,1681.06 773.67,1617.95 777.75,1676.68 781.83,1653.88 785.91,1673.17 789.99,1596.03 794.07,1526.78 798.15,1643.37 802.23,1667.91 806.31,1686.32 810.39,1634.60 814.47,1685.44 818.55,1662.65 822.63,1631.97 826.71,1645.12 830.79,1607.43 834.88,1620.58 838.96,1629.34 843.04,1650.38 847.12,1595.15 851.20,1662.65 855.28,1664.40 859.36,1680.18 863.44,1608.30 867.52,1647.75 871.60,1617.07 875.68,1610.93 879.76,1651.26 883.84,1658.27 887.92,1664.40 892.00,1538.18" fill="none" stroke="#7067e0" stroke-width="4" stroke-linejoin="miter" stroke-miterlimit="4"/>
<clipPath id="clip4"><rect x="1039.5" y="1299.5" width="798.8" height="400"/></clipPath>
<rect x="1043.5" y="1696.0" width="786.8" height="2" fill="#1b1e2c"/>
<rect x="1043.5" y="1635.25" width="786.8" height="2" fill="#1b1e2c"/>
<rect x="1043.5" y="1574.5" width="786.8" height="2" fill="#1b1e2c"/>
<rect x="1043.5" y="1513.75" width="786.8" height="2" fill="#1b1e2c"/>
<rect x="1043.5" y="1453.0" width="786.8" height="2" fill="#1b1e2c"/>
<polyline clip-path="url(#clip4)" points="1059.60,1697.00 1064.19,1697.00 1068.77,1697.00 1073.36,1697.00 1077.95,1697.00 1082.54,1697.00 1087.12,1697.00 1091.71,1697.00 1096.30,1697.00 1100.89,1697.00 1105.47,1697.00 1110.06,1697.00 1114.65,1697.00 1119.24,1697.00 1123.82,1697.00 1128.41,1697.00 1133.00,1697.00 1137.59,1697.00 1142.17,1697.00 1146.76,1697.00 1151.35,1697.00 1155.94,1697.00 1160.52,1697.00 1165.11,1697.00 1169.70,1697.00 1174.29,1636.25 1178.88,1697.00 1183.46,1697.00 1188.05,1636.25 1192.64,1697.00 1197.22,1697.00 1201.81,1697.00 1206.40,1697.00 1210.99,1697.00 1215.57,1697.00 1220.16,1697.00 1224.75,1697.00 1229.34,1697.00 1233.92,1697.00 1238.51,1697.00 1243.10,1697.00 1247.69,1697.00 1252.27,1697.00 1256.86,1697.00 1261.45,1697.00 1266.04,1697.00 1270.62,1697.00 1275.21,1697.00 1279.80,1697.00 1284.39,1697.00 1288.97,1697.00 1293.56,1697.00 1298.15,1697.00 1302.74,1697.00 1307.32,1697.00 1311.91,1697.00 1316.50,1697.00 1321.09,1697.00 1325.67,1697.00 1330.26,1697.00 1334.85,1697.00 1339.44,1697.00 1344.02,1697.00 1348.61,1697.00 1353.20,1697.00 1357.79,1697.00 1362.38,1697.00 1366.96,1697.00 1371.55,1697.00 1376.14,1697.00 1380.72,1697.00 1385.31,1697.00 1389.90,1697.00 1394.49,1575.50 1399.07,1697.00 1403.66,1697.00 1408.25,1697.00 1412.84,1697.00 1417.42,1697.00 1422.01,1697.00 1426.60,1697.00 1431.19,1697.00 1435.77,1697.00 1440.36,1697.00 1444.95,1697.00 1449.54,1697.00 1454.12,1697.00 1458.71,1697.00 1463.30,1697.00 1467.89,1697.00 1472.47,1697.00 1477.06,1697.00 1481.65,1697.00 1486.24,1697.00 1490.82,1697.00 1495.41,1697.00 1500.00,1697.00 1504.59,1697.00 1509.17,1697.00 1513.76,1697.00 1518.35,1697.00 1522.94,1697.00 1527.52,1697.00 1532.11,1697.00 1536.70,1697.00 1541.29,1697.00 1545.88,1697.00 1550.46,1697.00 1555.05,1697.00 1559.64,1697.00 1564.22,1697.00 1568.81,1697.00 1573.40,1697.00 1577.99,1697.00 1582.57,1697.00 1587.16,1697.00 1591.75,1697.00 1596.34,1697.00 1600.92,1697.00 1605.51,1697.00 1610.10,1697.00 1614.69,1454.00 1619.28,1697.00 1623.86,1697.00 1628.45,1697.00 1633.04,1697.00 1637.62,1697.00 1642.21,1697.00 1646.80,1697.00 1651.39,1697.00 1655.97,1697.00 1660.56,1697.00 1665.15,1697.00 1669.74,1697.00 1674.32,1697.00 1678.91,1697.00 1683.50,1697.00 1688.09,1697.00 1692.67,1697.00 1697.26,1697.00 1701.85,1697.00 1706.44,1697.00 1711.03,1697.00 1715.61,1697.00 1720.20,1636.25 1724.79,1636.25 1729.38,1697.00 1733.96,1697.00 1738.55,1697.00 1743.14,1697.00 1747.72,1697.00 1752.31,1697.00 1756.90,1697.00 1761.49,1697.00 1766.07,1697.00 1770.66,1697.00 1775.25,1697.00 1779.84,1697.00 1784.42,1697.00 1789.01,1697.00 1793.60,1697.00 1798.19,1697.00 1802.78,1697.00 1807.36,1697.00 1811.95,1697.00 1816.54,1697.00 1821.12,1697.00 1825.71,1697.00 1830.30,1697.00" fill="none" stroke="#6b7386" stroke-width="2" stroke-linejoin="miter" stroke-miterlimit="12"/>
<polyline clip-path="url(#clip4)" points="1059.60,1636.25 1064.19,1697.00 1068.77,1697.00 1073.36,1697.00 1077.95,1697.00 1082.54,1697.00 1087.12,1697.00 1091.71,1697.00 1096.30,1697.00 1100.89,1697.00 1105.47,1697.00 1110.06,1697.00 1114.65,1697.00 1119.24,1697.00 1123.82,1697.00 1128.41,1697.00 1133.00,1697.00 1137.59,1697.00 1142.17,1697.00 1146.76,1697.00 1151.35,1697.00 1155.94,1697.00 1160.52,1697.00 1165.11,1697.00 1169.70,1697.00 1174.29,1697.00 1178.88,1697.00 1183.46,1697.00 1188.05,1697.00 1192.64,1697.00 1197.22,1697.00 1201.81,1697.00 1206.40,1697.00 1210.99,1697.00 1215.57,1697.00 1220.16,1697.00 1224.75,1697.00 1229.34,1697.00 1233.92,1697.00 1238.51,1697.00 1243.10,1697.00 1247.69,1697.00 1252.27,1697.00 1256.86,1697.00 1261.45,1697.00 1266.04,1697.00 1270.62,1697.00 1275.21,1697.00 1279.80,1636.25 1284.39,1697.00 1288.97,1697.00 1293.56,1697.00 1298.15,1697.00 1302.74,1697.00 1307.32,1697.00 1311.91,1697.00 1316.50,1697.00 1321.09,1697.00 1325.67,1697.00 1330.26,1697.00 1334.85,1697.00 1339.44,1697.00 1344.02,1697.00 1348.61,1697.00 1353.20,1697.00 1357.79,1697.00 1362.38,1697.00 1366.96,1697.00 1371.55,1697.00 1376.14,1697.00 1380.72,1697.00 1385.31,1697.00 1389.90,1697.00 1394.49,1697.00 1399.07,1697.00 1403.66,1697.00 1408.25,1697.00 1412.84,1697.00 1417.42,1697.00 1422.01,1697.00 1426.60,1697.00 1431.19,1697.00 1435.77,1697.00 1440.36,1697.00 1444.95,1697.00 1449.54,1697.00 1454.12,1697.00 1458.71,1697.00 1463.30,1697.00 1467.89,1697.00 1472.47,1697.00 1477.06,1697.00 1481.65,1697.00 1486.24,1697.00 1490.82,1697.00 1495.41,1697.00 1500.00,1697.00 1504.59,1697.00 1509.17,1697.00 1513.76,1697.00 1518.35,1697.00 1522.94,1697.00 1527.52,1697.00 1532.11,1697.00 1536.70,1697.00 1541.29,1697.00 1545.88,1697.00 1550.46,1697.00 1555.05,1697.00 1559.64,1697.00 1564.22,1697.00 1568.81,1697.00 1573.40,1697.00 1577.99,1697.00 1582.57,1697.00 1587.16,1697.00 1591.75,1697.00 1596.34,1697.00 1600.92,1697.00 1605.51,1697.00 1610.10,1636.25 1614.69,1697.00 1619.28,1697.00 1623.86,1697.00 1628.45,1697.00 1633.04,1697.00 1637.62,1697.00 1642.21,1697.00 1646.80,1697.00 1651.39,1697.00 1655.97,1697.00 1660.56,1697.00 1665.15,1697.00 1669.74,1697.00 1674.32,1697.00 1678.91,1697.00 1683.50,1697.00 1688.09,1697.00 1692.67,1697.00 1697.26,1697.00 1701.85,1697.00 1706.44,1697.00 1711.03,1697.00 1715.61,1697.00 1720.20,1575.50 1724.79,1697.00 1729.38,1697.00 1733.96,1697.00 1738.55,1697.00 1743.14,1697.00 1747.72,1697.00 1752.31,1697.00 1756.90,1697.00 1761.49,1697.00 1766.07,1697.00 1770.66,1697.00 1775.25,1697.00 1779.84,1697.00 1784.42,1697.00 1789.01,1697.00 1793.60,1697.00 1798.19,1697.00 1802.78,1697.00 1807.36,1697.00 1811.95,1697.00 1816.54,1697.00 1821.12,1697.00 1825.71,1697.00 1830.30,1636.25" fill="none" stroke="#7067e0" stroke-width="4" stroke-linejoin="miter" stroke-miterlimit="12"/>
<clipPath id="clip5"><rect x="2008.3" y="1299.5" width="770.7" height="400"/></clipPath>
<rect x="2012.3" y="1696" width="758.7" height="2" fill="#1b1e2c"/>
<rect x="2012.3" y="1647.4" width="758.7" height="2" fill="#1b1e2c"/>
<rect x="2012.3" y="1598.8" width="758.7" height="2" fill="#1b1e2c"/>
<rect x="2012.3" y="1550.2" width="758.7" height="2" fill="#1b1e2c"/>
<rect x="2012.3" y="1501.6" width="758.7" height="2" fill="#1b1e2c"/>
<rect x="2012.3" y="1453" width="758.7" height="2" fill="#1b1e2c"/>
<polyline clip-path="url(#clip5)" points="2028.60,1697.00 2033.02,1697.00 2037.44,1697.00 2041.86,1697.00 2046.28,1697.00 2050.70,1697.00 2055.11,1697.00 2059.53,1697.00 2063.95,1697.00 2068.37,1697.00 2072.79,1697.00 2077.21,1697.00 2081.63,1697.00 2086.05,1697.00 2090.47,1697.00 2094.89,1697.00 2099.30,1697.00 2103.72,1697.00 2108.14,1697.00 2112.56,1697.00 2116.98,1697.00 2121.40,1697.00 2125.82,1697.00 2130.24,1697.00 2134.66,1697.00 2139.08,1697.00 2143.50,1697.00 2147.91,1697.00 2152.33,1697.00 2156.75,1697.00 2161.17,1697.00 2165.59,1697.00 2170.01,1697.00 2174.43,1697.00 2178.85,1697.00 2183.27,1697.00 2187.69,1697.00 2192.10,1697.00 2196.52,1697.00 2200.94,1697.00 2205.36,1697.00 2209.78,1697.00 2214.20,1697.00 2218.62,1697.00 2223.04,1697.00 2227.46,1697.00 2231.88,1697.00 2236.30,1697.00 2240.71,1697.00 2245.13,1697.00 2249.55,1697.00 2253.97,1697.00 2258.39,1697.00 2262.81,1697.00 2267.23,1697.00 2271.65,1697.00 2276.07,1697.00 2280.49,1697.00 2284.90,1697.00 2289.32,1697.00 2293.74,1697.00 2298.16,1697.00 2302.58,1697.00 2307.00,1697.00 2311.42,1697.00 2315.84,1697.00 2320.26,1697.00 2324.68,1697.00 2329.10,1697.00 2333.51,1697.00 2337.93,1697.00 2342.35,1697.00 2346.77,1697.00 2351.19,1697.00 2355.61,1697.00 2360.03,1697.00 2364.45,1697.00 2368.87,1697.00 2373.29,1697.00 2377.70,1697.00 2382.12,1697.00 2386.54,1697.00 2390.96,1697.00 2395.38,1697.00 2399.80,1697.00 2404.22,1697.00 2408.64,1697.00 2413.06,1697.00 2417.48,1697.00 2421.90,1697.00 2426.31,1697.00 2430.73,1697.00 2435.15,1697.00 2439.57,1697.00 2443.99,1697.00 2448.41,1697.00 2452.83,1697.00 2457.25,1697.00 2461.67,1697.00 2466.09,1697.00 2470.50,1697.00 2474.92,1697.00 2479.34,1697.00 2483.76,1697.00 2488.18,1697.00 2492.60,1697.00 2497.02,1697.00 2501.44,1697.00 2505.86,1697.00 2510.28,1697.00 2514.70,1697.00 2519.11,1697.00 2523.53,1697.00 2527.95,1697.00 2532.37,1697.00 2536.79,1697.00 2541.21,1697.00 2545.63,1697.00 2550.05,1697.00 2554.47,1697.00 2558.89,1697.00 2563.30,1697.00 2567.72,1697.00 2572.14,1697.00 2576.56,1697.00 2580.98,1697.00 2585.40,1697.00 2589.82,1697.00 2594.24,1697.00 2598.66,1697.00 2603.08,1697.00 2607.50,1697.00 2611.91,1697.00 2616.33,1697.00 2620.75,1697.00 2625.17,1697.00 2629.59,1697.00 2634.01,1697.00 2638.43,1697.00 2642.85,1697.00 2647.27,1697.00 2651.69,1697.00 2656.10,1697.00 2660.52,1697.00 2664.94,1697.00 2669.36,1697.00 2673.78,1697.00 2678.20,1697.00 2682.62,1697.00 2687.04,1697.00 2691.46,1697.00 2695.88,1697.00 2700.30,1697.00 2704.71,1697.00 2709.13,1697.00 2713.55,1697.00 2717.97,1697.00 2722.39,1697.00 2726.81,1697.00 2731.23,1697.00 2735.65,1697.00 2740.07,1697.00 2744.49,1697.00 2748.90,1697.00 2753.32,1697.00 2757.74,1697.00 2762.16,1697.00 2766.58,1697.00 2771.00,1697.00" fill="none" stroke="#6b7386" stroke-width="2" stroke-linejoin="miter" stroke-miterlimit="4"/>
<polyline clip-path="url(#clip5)" points="2028.60,1697.00 2033.02,1697.00 2037.44,1697.00 2041.86,1697.00 2046.28,1697.00 2050.70,1697.00 2055.11,1697.00 2059.53,1697.00 2063.95,1697.00 2068.37,1697.00 2072.79,1697.00 2077.21,1697.00 2081.63,1697.00 2086.05,1697.00 2090.47,1697.00 2094.89,1697.00 2099.30,1697.00 2103.72,1697.00 2108.14,1697.00 2112.56,1697.00 2116.98,1697.00 2121.40,1697.00 2125.82,1697.00 2130.24,1697.00 2134.66,1697.00 2139.08,1697.00 2143.50,1697.00 2147.91,1697.00 2152.33,1697.00 2156.75,1697.00 2161.17,1697.00 2165.59,1697.00 2170.01,1697.00 2174.43,1697.00 2178.85,1697.00 2183.27,1697.00 2187.69,1697.00 2192.10,1697.00 2196.52,1697.00 2200.94,1697.00 2205.36,1697.00 2209.78,1697.00 2214.20,1697.00 2218.62,1697.00 2223.04,1697.00 2227.46,1697.00 2231.88,1697.00 2236.30,1697.00 2240.71,1697.00 2245.13,1697.00 2249.55,1697.00 2253.97,1697.00 2258.39,1697.00 2262.81,1697.00 2267.23,1697.00 2271.65,1697.00 2276.07,1697.00 2280.49,1697.00 2284.90,1697.00 2289.32,1697.00 2293.74,1697.00 2298.16,1697.00 2302.58,1697.00 2307.00,1697.00 2311.42,1697.00 2315.84,1697.00 2320.26,1697.00 2324.68,1697.00 2329.10,1697.00 2333.51,1697.00 2337.93,1697.00 2342.35,1697.00 2346.77,1697.00 2351.19,1697.00 2355.61,1697.00 2360.03,1697.00 2364.45,1697.00 2368.87,1697.00 2373.29,1697.00 2377.70,1697.00 2382.12,1697.00 2386.54,1697.00 2390.96,1697.00 2395.38,1697.00 2399.80,1697.00 2404.22,1697.00 2408.64,1697.00 2413.06,1697.00 2417.48,1697.00 2421.90,1697.00 2426.31,1697.00 2430.73,1697.00 2435.15,1697.00 2439.57,1697.00 2443.99,1697.00 2448.41,1697.00 2452.83,1697.00 2457.25,1697.00 2461.67,1697.00 2466.09,1697.00 2470.50,1697.00 2474.92,1697.00 2479.34,1697.00 2483.76,1697.00 2488.18,1697.00 2492.60,1697.00 2497.02,1697.00 2501.44,1697.00 2505.86,1697.00 2510.28,1697.00 2514.70,1697.00 2519.11,1697.00 2523.53,1697.00 2527.95,1697.00 2532.37,1697.00 2536.79,1697.00 2541.21,1697.00 2545.63,1697.00 2550.05,1697.00 2554.47,1697.00 2558.89,1697.00 2563.30,1697.00 2567.72,1697.00 2572.14,1697.00 2576.56,1697.00 2580.98,1697.00 2585.40,1697.00 2589.82,1697.00 2594.24,1697.00 2598.66,1697.00 2603.08,1697.00 2607.50,1697.00 2611.91,1697.00 2616.33,1697.00 2620.75,1697.00 2625.17,1697.00 2629.59,1697.00 2634.01,1697.00 2638.43,1697.00 2642.85,1697.00 2647.27,1697.00 2651.69,1697.00 2656.10,1697.00 2660.52,1697.00 2664.94,1697.00 2669.36,1697.00 2673.78,1697.00 2678.20,1697.00 2682.62,1697.00 2687.04,1697.00 2691.46,1697.00 2695.88,1697.00 2700.30,1697.00 2704.71,1697.00 2709.13,1697.00 2713.55,1697.00 2717.97,1697.00 2722.39,1697.00 2726.81,1697.00 2731.23,1697.00 2735.65,1697.00 2740.07,1697.00 2744.49,1697.00 2748.90,1697.00 2753.32,1697.00 2757.74,1697.00 2762.16,1697.00 2766.58,1697.00 2771.00,1697.00" fill="none" stroke="#7067e0" stroke-width="4" stroke-linejoin="miter" stroke-miterlimit="4"/>
<circle cx="485.1" cy="1080.1" r="11.5" fill="none" stroke="#7067e0" stroke-width="2"/>
<circle cx="485.1" cy="1128.7" r="11.5" fill="none" stroke="#6b7386" stroke-width="2"/>
</svg>
<div class="b" style="left:518px;top:722px;width:640px;height:280px;background:#1b1e2c;border-radius:16px;box-shadow:0 4px 16px rgba(0,0,0,0.35);"></div>
<div class="b" style="left:518px;top:792px;width:640px;height:2px;background:#2a2e40;"></div>
<div class="b" style="left:518px;top:930px;width:640px;height:2px;background:#2a2e40;"></div>
<div class="b" style="left:550px;top:830px;width:16px;height:16px;border-radius:50%;background:#7067e0;"></div>
<div class="b" style="left:550px;top:877.7px;width:16px;height:16px;border-radius:50%;background:#667085;"></div>
<div class="t" style="top:744.05px;font-size:29px;line-height:29px;color:#ffffff;font-weight:700;font-family:'Liberation Sans', sans-serif;letter-spacing:0.3px;left:543.8px;-webkit-text-stroke:0.4px #1b1e2c;">Jun 26, 6:00 PM</div>
<div class="t" style="top:824.25px;font-size:29px;line-height:29px;color:#ffffff;font-weight:400;font-family:'Liberation Sans', sans-serif;left:582.9px;">Current period</div>
<div class="t" style="top:872.25px;font-size:29px;line-height:29px;color:#ffffff;font-weight:400;font-family:'Liberation Sans', sans-serif;left:582.9px;">Previous period</div>
<div class="t" style="top:824.25px;font-size:29px;line-height:29px;color:#ffffff;font-weight:400;font-family:'Liberation Sans', sans-serif;right:1765.2px;text-align:right;">9</div>
<div class="t" style="top:872.25px;font-size:29px;line-height:29px;color:#ffffff;font-weight:400;font-family:'Liberation Sans', sans-serif;right:1765.2px;text-align:right;">3</div>
<div class="t" style="top:952.45px;font-size:29px;line-height:29px;color:#a4a9b6;font-weight:400;font-family:'Liberation Sans', sans-serif;letter-spacing:0.45px;left:542.5px;">Click to view details</div>
</body></html>
